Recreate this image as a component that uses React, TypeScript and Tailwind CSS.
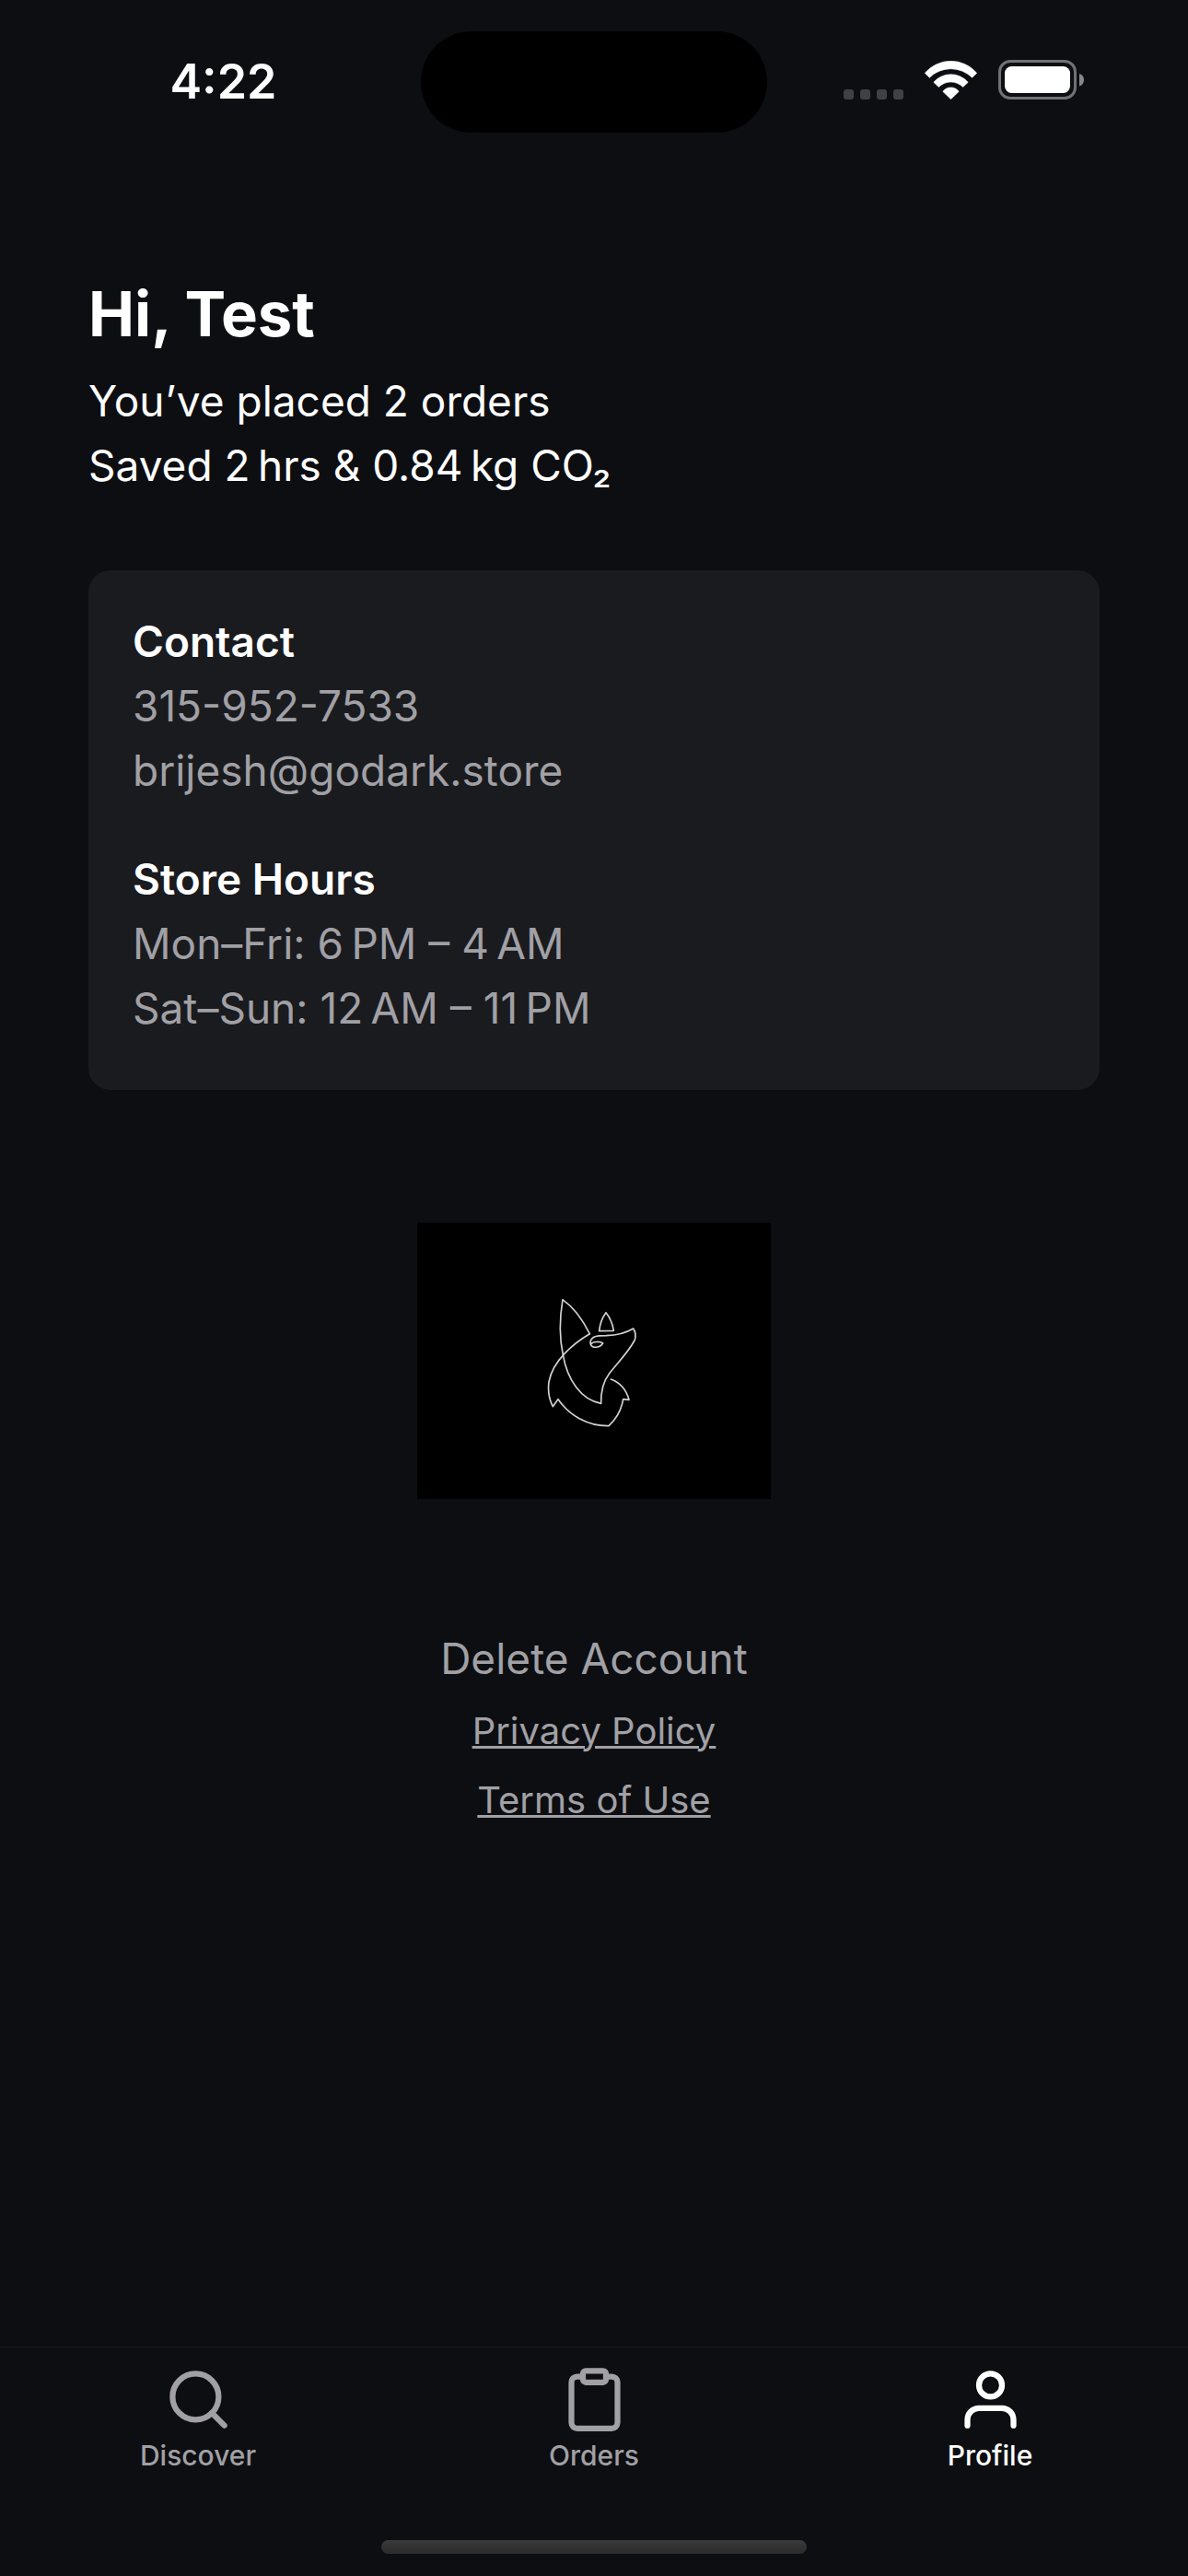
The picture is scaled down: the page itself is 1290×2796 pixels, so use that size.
import { FiClipboard, FiSearch, FiUser } from 'react-icons/fi';
import type { IconType } from 'react-icons';

interface Tab {
  label: string;
  href: string;
  icon: IconType;
}

const tabs: Tab[] = [
  { label: 'Discover', href: '#discover', icon: FiSearch },
  { label: 'Orders', href: '#orders', icon: FiClipboard },
  { label: 'Profile', href: '#profile', icon: FiUser },
];

export default function App() {
  return (
    <div className="flex min-h-screen flex-col bg-[#0d0e12] font-[Inter,'Liberation_Sans',sans-serif] text-white">
      <StatusBar />

      <main className="flex flex-1 flex-col px-24 pt-[154px]">
        <h1 className="text-[67px] leading-[86px] font-bold">Hi, Test</h1>
        <div className="mt-4 text-[46px] leading-[70px]">
          <p>You’ve placed 2 orders</p>
          <p>Saved 2{'\u2009'}hrs &amp; 0.84{'\u2009'}kg CO₂</p>
        </div>

        <section className="mt-[79px] flex flex-col gap-12 rounded-3xl bg-[#1a1b1f] px-12 pt-[42px] pb-[54px] text-[46px] leading-[70px] text-[#a1a0a5]">
          <div>
            <h2 className="font-semibold text-white">Contact</h2>
            <p>315-952-7533</p>
            <p>brijesh@godark.store</p>
          </div>
          <div>
            <h2 className="font-semibold text-white">Store Hours</h2>
            <p>Mon–Fri: 6{'\u2009'}PM – 4{'\u2009'}AM</p>
            <p>Sat–Sun: 12{'\u2009'}AM – 11{'\u2009'}PM</p>
          </div>
        </section>

        <FoxLogo />

        <div className="mt-[138px] flex flex-col items-center text-[#a1a0a5]">
          <button type="button" className="mb-[6px] text-[46px] leading-[70px]">
            Delete Account
          </button>
          <a href="#privacy" className="text-[40px] leading-[75px] underline decoration-3">
            Privacy Policy
          </a>
          <a href="#terms" className="text-[40px] leading-[75px] underline decoration-3">
            Terms of Use
          </a>
        </div>
      </main>

      <TabBar active="Profile" />
    </div>
  );
}

function StatusBar() {
  return (
    <header className="grid grid-cols-[1fr_376px_1fr] items-center pt-[34px]">
      <p className="pl-7 text-center text-[52px] leading-[60px] font-semibold">4:22</p>
      <div className="h-[110px] rounded-full bg-black" />
      <div className="flex items-center justify-end gap-[23px] pr-[113px] pb-[5px]">
        {/* No signal */}
        <div className="flex h-[42px] items-end gap-[7px]">
          <span className="size-[11px] rounded-[3px] bg-[#404145]" />
          <span className="size-[11px] rounded-[3px] bg-[#404145]" />
          <span className="size-[11px] rounded-[3px] bg-[#404145]" />
          <span className="size-[11px] rounded-[3px] bg-[#404145]" />
        </div>
        <svg viewBox="0 0 57 42" className="h-[42px] w-[57px]" fill="white" stroke="white" strokeWidth="0.6" strokeLinejoin="round">
          <path d="M0.3 13.3A37.2 37.2 0 0 1 56.7 13.3L51.7 18.3A32.8 32.8 0 0 0 5.3 18.3Z" />
          <path d="M9.8 23.3A24.6 24.6 0 0 1 47.2 23.3L41.7 28.5A18.6 18.6 0 0 0 15.3 28.5Z" />
          <path d="M19.8 33.3A10.8 10.8 0 0 1 37.2 33.3L28.5 41.7Z" />
        </svg>
        <svg viewBox="0 0 93 43" className="h-[43px] w-[93px]">
          <rect x="1.5" y="1.5" width="82" height="40" rx="11.5" fill="none" stroke="#717275" strokeWidth="3" />
          <rect x="7" y="7" width="71" height="29" rx="7.5" fill="white" />
          <path d="M88 15C91.5 16 93 18.5 93 21.5S91.5 27.5 88 28.5Z" fill="#86878a" />
        </svg>
      </div>
    </header>
  );
}

function FoxLogo() {
  return (
    <div className="mt-36 self-center bg-black">
      <svg viewBox="-351 -159 1152 900" className="h-[300px] w-96" fill="none" stroke="#d2d2d2" strokeWidth="5" strokeLinejoin="round" strokeLinecap="round">
        {/* Ear, chin, snout and eye */}
        <path d="M211 203C188 157 160 118 123 92C113 150 112 215 124 272C138 352 182 418 248 430C247 394 252 362 275 332C300 300 335 265 357 225C363 210 361 198 353 186C325 203 300 208 265 209C235 209 215 210 213 232C214 253 243 250 254 234C245 227 222 228 215 236" />
        {/* Back and chest */}
        <path d="M211 203C160 233 90 290 78 360C74 390 78 415 91 440L108 416C145 470 205 504 273 503C300 478 315 448 320 416L339 418C331 388 310 362 280 351" />
        {/* Far ear */}
        <path d="M242 194C244 172 252 150 264 134C277 150 286 172 289 193Z" />
      </svg>
    </div>
  );
}

function TabBar({ active }: { active: string }) {
  return (
    <footer className="border-t border-[#191a1e]">
      <nav className="grid grid-cols-3 pt-[19px]">
        {tabs.map(({ label, href, icon: Icon }) => (
          <a
            key={label}
            href={href}
            aria-current={label === active ? 'page' : undefined}
            className={`flex flex-col items-center ${label === active ? 'text-white' : 'text-[#a1a0a5]'}`}
          >
            <Icon className="size-[75px]" />
            <span className="mt-[5px] text-[30px] leading-[36px] font-medium">{label}</span>
          </a>
        ))}
      </nav>
      <div className="mx-auto mt-[74px] mb-6 h-[15px] w-[462px] rounded-full bg-linear-to-b from-[#3a3a3a] to-[#2b2b2c]" />
    </footer>
  );
}
